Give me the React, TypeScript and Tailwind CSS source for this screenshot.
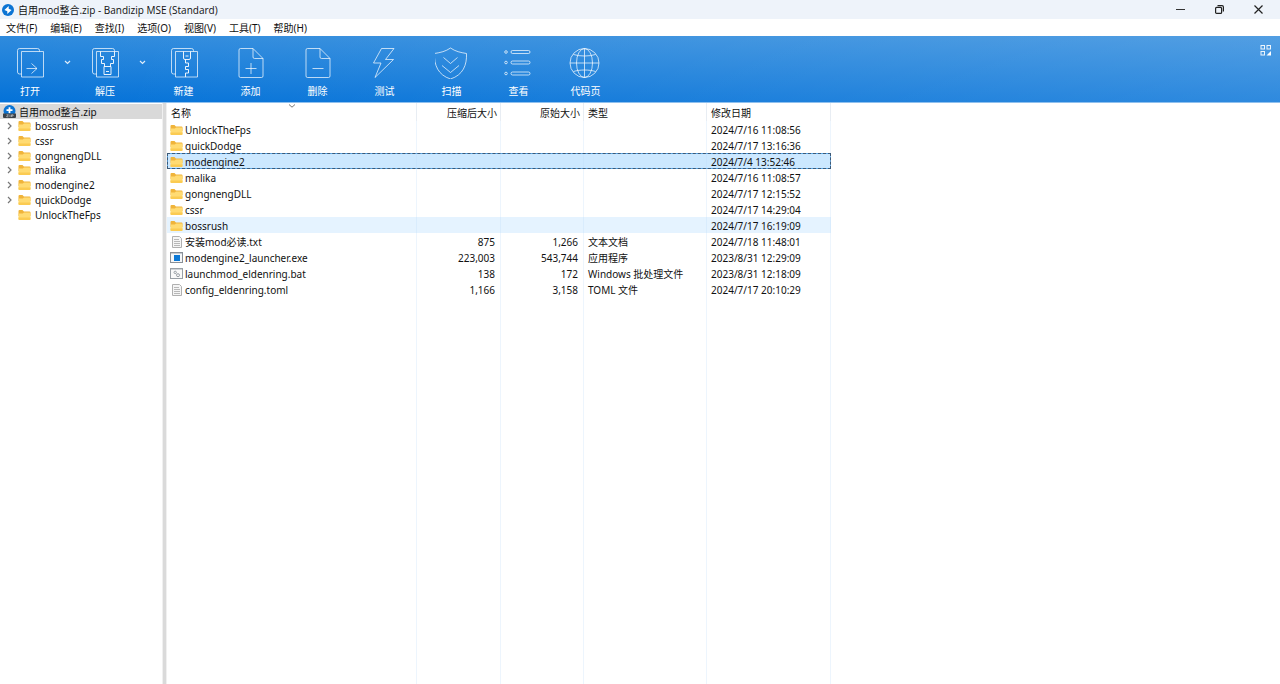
import { useState } from "react";
import type { ReactNode } from "react";

type Kind = "folder" | "text" | "exe" | "bat";

interface Entry {
  name: string;
  kind: Kind;
  packed?: string;
  size?: string;
  type?: string;
  date: string;
}

const menus = ["文件(F)", "编辑(E)", "查找(I)", "选项(O)", "视图(V)", "工具(T)", "帮助(H)"];

const tree = [
  { name: "bossrush", expandable: true },
  { name: "cssr", expandable: true },
  { name: "gongnengDLL", expandable: true },
  { name: "malika", expandable: true },
  { name: "modengine2", expandable: true },
  { name: "quickDodge", expandable: true },
  { name: "UnlockTheFps", expandable: false },
];

const entries: Entry[] = [
  { name: "UnlockTheFps", kind: "folder", date: "2024/7/16 11:08:56" },
  { name: "quickDodge", kind: "folder", date: "2024/7/17 13:16:36" },
  { name: "modengine2", kind: "folder", date: "2024/7/4 13:52:46" },
  { name: "malika", kind: "folder", date: "2024/7/16 11:08:57" },
  { name: "gongnengDLL", kind: "folder", date: "2024/7/17 12:15:52" },
  { name: "cssr", kind: "folder", date: "2024/7/17 14:29:04" },
  { name: "bossrush", kind: "folder", date: "2024/7/17 16:19:09" },
  { name: "安装mod必读.txt", kind: "text", packed: "875", size: "1,266", type: "文本文档", date: "2024/7/18 11:48:01" },
  { name: "modengine2_launcher.exe", kind: "exe", packed: "223,003", size: "543,744", type: "应用程序", date: "2023/8/31 12:29:09" },
  { name: "launchmod_eldenring.bat", kind: "bat", packed: "138", size: "172", type: "Windows 批处理文件", date: "2023/8/31 12:18:09" },
  { name: "config_eldenring.toml", kind: "text", packed: "1,166", size: "3,158", type: "TOML 文件", date: "2024/7/17 20:10:29" },
];

/* ── File icons ── */

function FolderIcon() {
  return (
    <svg width="13" height="12" viewBox="0 0 13 12" className="shrink-0" aria-hidden="true">
      <path d="M.5 2a1 1 0 0 1 1-1h3l1.4 1.4h5.6a1 1 0 0 1 1 1V7H.5z" fill="#f0b43a" />
      <path d="M.5 4.6h4.3l1.2-1h5.5a1 1 0 0 1 1 1V10a1 1 0 0 1-1 1h-10a1 1 0 0 1-1-1z" fill="#ffdb73" />
      <path d="M.5 8.4h12V10a1 1 0 0 1-1 1h-10a1 1 0 0 1-1-1z" fill="#fbcb52" />
    </svg>
  );
}

function FileIcon({ kind }: { kind: Kind }) {
  if (kind === "folder") return <FolderIcon />;
  if (kind === "exe") {
    return (
      <svg width="13" height="12" viewBox="0 0 13 12" className="shrink-0" aria-hidden="true">
        <rect x=".5" y=".5" width="12" height="10" fill="#f4f6f8" stroke="#8a9097" />
        <path d="M1 1.5h11" stroke="#c5cad0" />
        <rect x="4" y="3" width="6" height="6" fill="#0a78d6" />
      </svg>
    );
  }
  if (kind === "bat") {
    return (
      <svg width="13" height="12" viewBox="0 0 13 12" className="shrink-0" aria-hidden="true">
        <rect x=".5" y=".5" width="12" height="10" fill="#fafafa" stroke="#9aa0a6" />
        <path d="M1 1.5h11" stroke="#cfd3d7" />
        <circle cx="5.2" cy="4.4" r="1.2" fill="none" stroke="#9aa0a6" />
        <circle cx="8" cy="7.2" r="1.5" fill="none" stroke="#9aa0a6" />
      </svg>
    );
  }
  return (
    <svg width="13" height="12" viewBox="0 0 13 12" className="shrink-0" aria-hidden="true">
      <path d="M2.5.5h7l2 2v9h-9z" fill="#f5f5f5" stroke="#b0b0b0" />
      <path d="M4 3.5h5M4 5.5h6M4 7.5h6M4 9.5h6" stroke="#b8b8b8" />
    </svg>
  );
}

function AppIcon() {
  return (
    <svg width="12" height="12" viewBox="0 0 12 12" className="shrink-0" aria-hidden="true">
      <circle cx="6" cy="6" r="6" fill="#0b74d4" />
      <path d="M6.700 2v2.800L9.600 6 5.300 10V7.200L2.400 6z" fill="#fff" />
    </svg>
  );
}

function ArchiveIcon() {
  return (
    <svg width="13" height="13" viewBox="0 0 13 13" className="shrink-0" aria-hidden="true">
      <circle cx="6.5" cy="6" r="6" fill="#0b74d4" />
      <path d="M6.5 2.2v6M3.5 5.2h6" stroke="#fff" strokeWidth="1.8" />
      <path d="M0 8.6h13V12a1 1 0 0 1-1 1H1a1 1 0 0 1-1-1z" fill="#3c4248" />
      <path d="M3.5 9.8h2l-2 2h2M7 9.6v2.4M8.500 12V9.8h1.6v1.2H8.5" fill="none" stroke="#d9dcdf" strokeWidth=".6" />
    </svg>
  );
}

/* ── Toolbar ── */

const pages = "M8.5 4.5h22v25.5h-22z M8.5 27h-2a2 2 0 0 1-2-2V3.5a2 2 0 0 1 2-2h18a2 2 0 0 1 2 2v1";
const sheet = "M19 1.5H6.5A1.5 1.5 0 0 0 5 3v26a1.5 1.5 0 0 0 1.500 1.500h21a1.500 1.500 0 0 0 1.500-1.500V11.500z M19 1.500V10a1.500 1.500 0 0 0 1.500 1.500H29";

function ToolIcon({ children }: { children: ReactNode }) {
  return (
    <svg
      width="34"
      height="32"
      viewBox="0 0 34 32"
      fill="none"
      stroke="#fff"
      strokeOpacity=".7"
      strokeLinejoin="round"
      aria-hidden="true"
    >
      {children}
    </svg>
  );
}

function Tool({ label, narrow, children }: { label: string; narrow?: boolean; children: ReactNode }) {
  return (
    <button
      type="button"
      className={`flex flex-col items-center pt-[11px] hover:bg-white/10 ${narrow ? "w-[60px]" : "w-[67px]"}`}
    >
      <ToolIcon>{children}</ToolIcon>
      <span className="mt-1 leading-4">{label}</span>
    </button>
  );
}

function DropArrow({ label }: { label: string }) {
  return (
    <button type="button" aria-label={label} className="flex w-[15px] justify-center pt-6 hover:bg-white/10">
      <svg width="7" height="5" viewBox="0 0 7 5" fill="none" stroke="#fff" strokeWidth="1.2" strokeOpacity=".85" aria-hidden="true">
        <path d="M1 1l2.500 2.500L6 1" />
      </svg>
    </button>
  );
}

function Toolbar() {
  return (
    <div className="flex h-[67px] shrink-0 border-b border-[#8fc0ee] bg-[linear-gradient(to_right,transparent,rgba(255,255,255,0.17)),linear-gradient(to_bottom,#2f8bdd,#0472d8)] text-white">
      <Tool label="打开" narrow>
        <path d={pages} />
        <path d="M13.500 21.500h10.500M18.500 16.500l5.500 5-5.500 5" />
      </Tool>
      <DropArrow label="打开选项" />
      <Tool label="解压" narrow>
        <path d={pages} />
        <path d="M12.500 4.500v5h3v3h-2v4h3v3M26.500 4.500v5h-3v3h2v4h-3v3" strokeOpacity=".9" />
        <path d="M16 19.500h7v8h-7zM18 24.500h3" strokeOpacity=".9" />
      </Tool>
      <DropArrow label="解压选项" />
      <Tool label="新建">
        <path d={pages} />
        <path d="M16.500 4.500v6.500a1.500 1.500 0 0 0 1.500 1.500h4a1.500 1.500 0 0 0 1.500-1.500V4.500M18.500 9h3" strokeOpacity=".9" />
        <path d="M18.500 12.500v3.500h3v3.500h-3v3h3v3.500h-3v4" strokeOpacity=".9" />
      </Tool>
      <Tool label="添加">
        <path d={sheet} />
        <path d="M11.500 21.500h11M17 16v11" />
      </Tool>
      <Tool label="删除">
        <path d={sheet} />
        <path d="M11.500 21.500h11" />
      </Tool>
      <Tool label="测试">
        <path d="M13.500 1.500H26L17.500 12.500H25.500L7 30.500L13 16H5.500z" />
      </Tool>
      <Tool label="扫描">
        <path d="M15.500 1c5 3.500 10 4.500 16 5.500C32 18 28 28 15.500 32 3 28-1 18-.500 6.500 5.500 5.500 10.500 4.500 15.500 1z" />
        <path d="M8.500 10.500l7 6 7-6M7 18.500l8.500 7 8.500-7" />
      </Tool>
      <Tool label="查看">
        <circle cx="4" cy="5" r="1.300" />
        <circle cx="4" cy="15.500" r="1.300" />
        <circle cx="4" cy="26.500" r="1.300" />
        <rect x="9" y="3.500" width="19" height="3" rx="1.500" />
        <rect x="9" y="14" width="19" height="3" rx="1.500" />
        <rect x="9" y="25" width="19" height="3" rx="1.500" />
      </Tool>
      <Tool label="代码页">
        <circle cx="15.500" cy="16" r="14.500" />
        <ellipse cx="15.500" cy="16" rx="8" ry="14.500" />
        <path d="M15.500 1.500v29M1 16h29M4.500 7.500c6 2 16 2 22 0M4.500 24.500c6-2 16-2 22 0" />
      </Tool>
      <button type="button" aria-label="切换布局" className="mt-2 mr-2 ml-auto h-3 w-3">
        <svg width="12" height="12" viewBox="0 0 12 12" fill="none" stroke="#fff" strokeOpacity=".9" aria-hidden="true">
          <rect x="1" y="1.500" width="3.500" height="3.500" />
          <rect x="7" y="1.500" width="3.500" height="3.500" />
          <rect x="1" y="7.500" width="3.500" height="3.500" />
          <path d="M11 7v4.500H6.500z" fill="#fff" stroke="none" />
        </svg>
      </button>
    </div>
  );
}

/* ── Title bar ── */

function TitleBar() {
  return (
    <header className="flex h-[19px] shrink-0 items-center bg-[#eef3fa] px-0.5">
      <AppIcon />
      <h1 className="ml-1 font-['Open_Sans','Noto_Sans_CJK_SC',sans-serif]">自用mod整合.zip - Bandizip MSE (Standard)</h1>
      <div className="ml-auto flex h-full">
        <button type="button" aria-label="最小化" className="flex w-[39px] items-center justify-center">
          <svg width="9" height="9" viewBox="0 0 9 9" stroke="#333" aria-hidden="true">
            <path d="M0 4.500h9" />
          </svg>
        </button>
        <button type="button" aria-label="还原" className="flex w-[39px] items-center justify-center">
          <svg width="9" height="9" viewBox="0 0 9 9" fill="none" stroke="#222" strokeWidth="1.200" aria-hidden="true">
            <rect x=".6" y="2.400" width="6" height="6" rx="1" />
            <path d="M2.500 .6H7a1.500 1.500 0 0 1 1.400 1.500v4.400" />
          </svg>
        </button>
        <button type="button" aria-label="关闭" className="flex w-[39px] items-center justify-center">
          <svg width="9" height="9" viewBox="0 0 9 9" stroke="#222" strokeWidth="1.200" aria-hidden="true">
            <path d="M.5 .5l8 8M8.500 .5l-8 8" />
          </svg>
        </button>
      </div>
    </header>
  );
}

/* ── Folder tree ── */

function FolderTree() {
  return (
    <aside className="w-[162px] shrink-0 pt-px">
      <button type="button" className="flex h-[15px] w-full items-center gap-[3px] bg-[#d9d9d9] pl-[3px]">
        <ArchiveIcon />
        自用mod整合.zip
      </button>
      <ul className="grid h-[103px] auto-rows-fr">
        {tree.map((node) => (
          <li key={node.name}>
            <button type="button" className="flex h-full w-full items-center pl-1.5">
              <span className="w-3">
                {node.expandable && (
                  <svg width="7" height="8" viewBox="0 0 7 8" fill="none" stroke="#777" strokeWidth="1.200" aria-hidden="true">
                    <path d="M2 1l3 3-3 3" />
                  </svg>
                )}
              </span>
              <FolderIcon />
              <span className="ml-1">{node.name}</span>
            </button>
          </li>
        ))}
      </ul>
    </aside>
  );
}

/* ── File list ── */

function FileList() {
  const [selected, setSelected] = useState("modengine2");

  return (
    <table className="h-full w-[664px] table-fixed border-separate border-spacing-0 [&_td]:border-r [&_td]:border-[#b9d9f8]/25 [&_td]:p-0 [&_td]:align-bottom [&_th]:border-r [&_th]:border-[#e8edf3] [&_th]:p-0 [&_th]:pt-0.5 [&_th]:font-normal">
      <colgroup>
        <col className="w-[250px]" />
        <col className="w-[84px]" />
        <col className="w-[83px]" />
        <col className="w-[123px]" />
        <col className="w-[124px]" />
      </colgroup>
      <thead>
        <tr className="h-[18px]">
          <th className="relative text-left">
            <span className="pl-1">名称</span>
            <svg
              width="7"
              height="4"
              viewBox="0 0 7 4"
              fill="none"
              stroke="#777"
              className="absolute top-px left-1/2 -translate-x-1/2"
              aria-hidden="true"
            >
              <path d="M.5 .5l3 2.700 3-2.700" />
            </svg>
          </th>
          <th className="text-right"><span className="pr-[3px]">压缩后大小</span></th>
          <th className="text-right"><span className="pr-[3px]">原始大小</span></th>
          <th className="text-left"><span className="pl-1">类型</span></th>
          <th className="text-left"><span className="pl-1">修改日期</span></th>
        </tr>
      </thead>
      <tbody>
        {entries.map((entry) => (
          <tr
            key={entry.name}
            onClick={() => setSelected(entry.name)}
            className={`h-4 ${
              entry.name === selected
                ? "bg-[#cce8ff] shadow-[inset_0_0_0_1px_#5ba8e8] outline-1 -outline-offset-1 outline-dashed outline-[#3c5a78]"
                : entry.name === "bossrush"
                  ? "bg-[#e5f3ff]"
                  : ""
            }`}
          >
            <td>
              <div className="flex items-center gap-0.5 pl-[3px]">
                <FileIcon kind={entry.kind} />
                <span>{entry.name}</span>
              </div>
            </td>
            <td className="text-right"><span className="pr-[5px]">{entry.packed}</span></td>
            <td className="text-right"><span className="pr-[5px]">{entry.size}</span></td>
            <td><span className="pl-1">{entry.type}</span></td>
            <td><span className="pl-1">{entry.date}</span></td>
          </tr>
        ))}
        {/* keeps the column lines running to the bottom */}
        <tr aria-hidden="true">
          <td />
          <td />
          <td />
          <td />
          <td />
        </tr>
      </tbody>
    </table>
  );
}

export default function App() {
  return (
    <div className="flex h-screen flex-col overflow-hidden bg-white font-['Noto_Sans','Noto_Sans_CJK_SC',sans-serif] text-[10px] leading-[14px] whitespace-nowrap text-[#111]">
      <TitleBar />
      <nav className="flex h-[17px] shrink-0 items-center gap-[13px] px-1.5">
        {menus.map((menu) => (
          <button key={menu} type="button">
            {menu}
          </button>
        ))}
      </nav>
      <Toolbar />
      <main className="flex min-h-0 flex-1">
        <FolderTree />
        <div className="w-[5px] shrink-0 cursor-col-resize border-r border-l border-[#f0f0f0] bg-[#dadada]" />
        <div className="min-w-0 flex-1">
          <FileList />
        </div>
      </main>
    </div>
  );
}
